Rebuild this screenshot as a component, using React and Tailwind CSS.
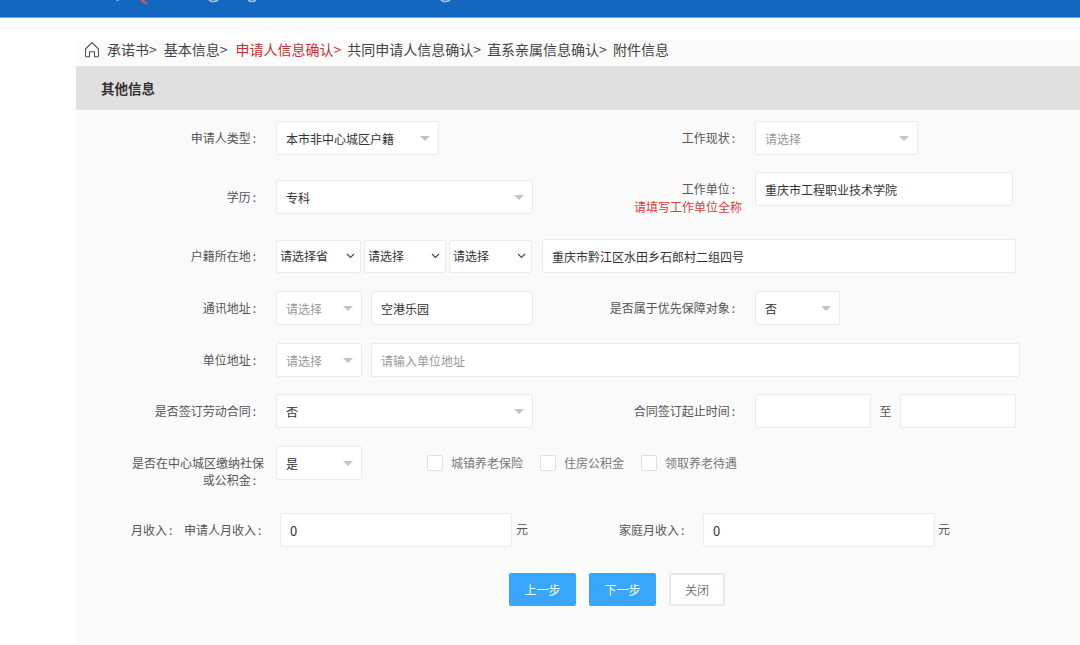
const FONT = '"Noto Sans CJK SC","Liberation Sans",sans-serif';

function Caret() {
  return <span className="ml-auto -translate-y-[1px] h-0 w-0 border-x-[5px] border-t-[5px] border-x-transparent border-t-[#c4c4c4]" />;
}

function Sel({ w, text, ph }) {
  return (
    <div className={`flex h-[34px] shrink-0 items-center rounded-[2px] border border-[#ebebeb] bg-white pl-[9px] pr-[8px] pt-[2px] ${w} ${ph ? "text-[#999]" : "text-[#333]"}`}>
      <span>{text}</span>
      <Caret />
    </div>
  );
}

function Native({ w, text }) {
  return (
    <div className={`flex h-[33px] shrink-0 items-center rounded-[2px] border border-[#ebebeb] bg-white pl-[3px] pr-[5px] text-[#333] ${w}`}>
      <span>{text}</span>
      <svg className="ml-auto" width="9" height="6" viewBox="0 0 9 6" fill="none" stroke="#444" strokeWidth="1.1">
        <path d="M1 1l3.5 3.5L8 1" />
      </svg>
    </div>
  );
}

function Input({ w, text, ph, cls = "" }) {
  return (
    <div className={`flex h-[34px] shrink-0 items-center rounded-[2px] border border-[#ebebeb] bg-white pl-[9px] pr-[8px] pt-[2px] ${w} ${ph ? "text-[#999]" : "text-[#333]"} ${cls}`}>
      {text}
    </div>
  );
}

function Colon() {
  return <span className="ml-[2px]">:</span>;
}

function Label({ children, w = "w-[180px]" }) {
  return (
    <div className={`shrink-0 text-right text-[#555] ${w}`}>
      {children}
      <Colon />
    </div>
  );
}

function Check({ text, cls }) {
  return (
    <div className={`flex items-center ${cls}`}>
      <span className="h-[16px] w-[16px] rounded-[2px] border border-[#e0e0e0] bg-white" />
      <span className="ml-[8px] text-[#777]">{text}</span>
    </div>
  );
}

export default function App() {
  return (
    <div className="h-[645px] w-[1080px] overflow-hidden bg-white text-[12px]" style={{ fontFamily: FONT }}>
      <div className="flex h-[18px] items-start overflow-hidden border-b border-[#6ea3dc] bg-[#1367c0] pl-[110px]">
        <svg width="345" height="8" viewBox="0 0 345 8">
          <path d="M31 0l6 4" stroke="#d8553f" strokeWidth="2.2" fill="none" />
          <path d="M6 0h3" stroke="#8fb3dc" strokeWidth="1.4" fill="none" />
          <path d="M99 0q4 3 9 0M138 0q4 3 8 0M331 0q4 3 9 0" stroke="#a9c4e4" strokeWidth="1.6" fill="none" />
        </svg>
      </div>

      <div className="ml-[76px] mt-[22px]">
        <div className="flex h-[26px] items-center bg-[#fbfbfb] pb-[8px] pl-[8px] text-[14px] text-[#444]">
          <svg width="16" height="17" viewBox="0 0 16 17" fill="none" stroke="#555" strokeWidth="1.1" className="mr-[7px]">
            <path d="M1.5 8L8 1.5 14.5 8v7a.8.8 0 0 1-.8.8H10.5v-5h-5v5H2.3a.8.8 0 0 1-.8-.8z" />
          </svg>
          <span>承诺书&gt;</span>
          <span className="ml-[7px]">基本信息&gt;</span>
          <span className="ml-[8px] text-[#c62f2f]">申请人信息确认&gt;</span>
          <span className="ml-[6px]">共同申请人信息确认&gt;</span>
          <span className="ml-[6px]">直系亲属信息确认&gt;</span>
          <span className="ml-[6px]">附件信息</span>
        </div>

        <div className="flex h-[44px] items-center border-y border-[#e6e6e6] bg-[#e0e0e0] pl-[25px] text-[13.5px] font-bold text-[#333]">
          其他信息
        </div>

        <div className="h-[535px] bg-[#fafafa] pt-[11px]">
          <div className="flex items-center">
            <Label>申请人类型</Label>
            <div className="ml-[20px]"><Sel w="w-[163px]" text="本市非中心城区户籍" /></div>
            <Label w="w-[296px]">工作现状</Label>
            <div className="ml-[20px]"><Sel w="w-[163px]" text="请选择" ph /></div>
          </div>

          <div className="mt-[17px] flex items-start">
            <div className="w-[180px] shrink-0 pt-[16px] text-right leading-[18px] text-[#555]">学历<Colon /></div>
            <div className="ml-[20px] pt-[8px]"><Sel w="w-[257px]" text="专科" /></div>
            <div className="w-[209px] shrink-0 pt-[8px] text-right leading-[18px] text-[#555]">
              <div className="pr-[7px]">工作单位<Colon /></div>
              <div className="text-[#d93a3a]">请填写工作单位全称</div>
            </div>
            <div className="ml-[13px]"><Input w="w-[258px]" text="重庆市工程职业技术学院" /></div>
          </div>

          <div className="mt-[23px] flex items-center">
            <Label>户籍所在地</Label>
            <div className="ml-[20px] flex gap-[3px]">
              <Native w="w-[85px]" text="请选择省" />
              <Native w="w-[82px]" text="请选择" />
              <Native w="w-[83px]" text="请选择" />
            </div>
            <div className="ml-[10px]"><Input w="w-[474px]" text="重庆市黔江区水田乡石郎村二组四号" /></div>
          </div>

          <div className="mt-[18px] flex items-center">
            <Label>通讯地址</Label>
            <div className="ml-[20px] flex gap-[9px]">
              <Sel w="w-[86px]" text="请选择" ph />
              <Input w="w-[162px]" text="空港乐园" />
            </div>
            <Label w="w-[202px]">是否属于优先保障对象</Label>
            <div className="ml-[20px]"><Sel w="w-[85px]" text="否" /></div>
          </div>

          <div className="mt-[18px] flex items-center">
            <Label>单位地址</Label>
            <div className="ml-[20px] flex gap-[9px]">
              <Sel w="w-[86px]" text="请选择" ph />
              <Input w="w-[649px]" text="请输入单位地址" ph cls="border-[#e4e4e4]" />
            </div>
          </div>

          <div className="mt-[17px] flex items-center">
            <Label>是否签订劳动合同</Label>
            <div className="ml-[20px]"><Sel w="w-[257px]" text="否" /></div>
            <Label w="w-[202px]">合同签订起止时间</Label>
            <div className="ml-[20px]"><Input w="w-[116px]" text="" /></div>
            <span className="w-[29px] shrink-0 text-center text-[#555]">至</span>
            <Input w="w-[116px]" text="" />
          </div>

          <div className="mt-[18px] flex items-start">
            <div className="w-[188px] shrink-0 pt-[8px] text-right leading-[17px] text-[#555]">
              是否在中心城区缴纳社保
              <div className="pr-[8px]">或公积金<Colon /></div>
            </div>
            <div className="ml-[12px]"><Sel w="w-[86px]" text="是" /></div>
            <div className="flex pt-[8px]">
              <Check cls="ml-[65px]" text="城镇养老保险" />
              <Check cls="ml-[17px]" text="住房公积金" />
              <Check cls="ml-[17px]" text="领取养老待遇" />
            </div>
          </div>

          <div className="mt-[25px] flex items-center">
            <div className="ml-[55px] w-[53px] shrink-0 whitespace-nowrap text-[#555]">月收入<Colon /></div>
            <div className="w-[76px] shrink-0 whitespace-nowrap text-[#555]">申请人月收入<Colon /></div>
            <div className="ml-[20px]"><Input w="w-[232px]" text="0" cls="text-[13px]" /></div>
            <span className="ml-[4px] -translate-y-[1px] text-[#555]">元</span>
            <div className="ml-[91px] w-[66px] shrink-0 whitespace-nowrap text-[#555]">家庭月收入<Colon /></div>
            <div className="ml-[18px]"><Input w="w-[232px]" text="0" cls="text-[13px]" /></div>
            <span className="ml-[3px] -translate-y-[1px] text-[#555]">元</span>
          </div>

          <div className="mt-[26px] flex pl-[433px]">
            <button className="h-[33px] w-[67px] rounded-[2px] bg-[#38a7fb] text-white">上一步</button>
            <button className="ml-[13px] h-[33px] w-[67px] rounded-[2px] bg-[#38a7fb] text-white">下一步</button>
            <button className="ml-[13px] h-[33px] w-[56px] rounded-[2px] border-2 border-[#e8e8e8] bg-white text-[#777]">关闭</button>
          </div>
        </div>
      </div>
    </div>
  );
}
